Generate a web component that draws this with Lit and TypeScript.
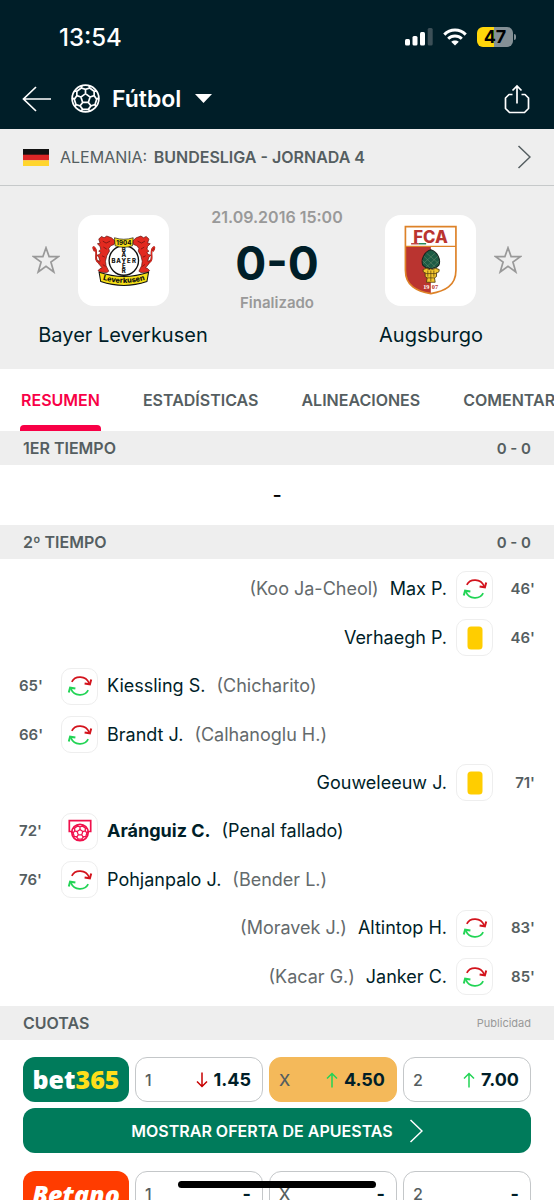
import { LitElement, html, svg, css, nothing } from "lit";
import { customElement, property, state } from "lit/decorators.js";
import { classMap } from "lit/directives/class-map.js";

type Side = "home" | "away";
type Kind = "sub" | "card" | "penalty";

interface MatchEvent {
  side: Side;
  minute: string;
  kind: Kind;
  player: string;
  detail?: string;
}

interface Odd {
  label: string;
  value: string;
  trend?: "up" | "down";
  selected?: boolean;
}

const EVENTS: MatchEvent[] = [
  { side: "away", minute: "46'", kind: "sub", player: "Max P.", detail: "(Koo Ja-Cheol)" },
  { side: "away", minute: "46'", kind: "card", player: "Verhaegh P." },
  { side: "home", minute: "65'", kind: "sub", player: "Kiessling S.", detail: "(Chicharito)" },
  { side: "home", minute: "66'", kind: "sub", player: "Brandt J.", detail: "(Calhanoglu H.)" },
  { side: "away", minute: "71'", kind: "card", player: "Gouweleeuw J." },
  { side: "home", minute: "72'", kind: "penalty", player: "Aránguiz C.", detail: "(Penal fallado)" },
  { side: "home", minute: "76'", kind: "sub", player: "Pohjanpalo J.", detail: "(Bender L.)" },
  { side: "away", minute: "83'", kind: "sub", player: "Altintop H.", detail: "(Moravek J.)" },
  { side: "away", minute: "85'", kind: "sub", player: "Janker C.", detail: "(Kacar G.)" },
];

const TABS = ["RESUMEN", "ESTADÍSTICAS", "ALINEACIONES", "COMENTARIOS"];

const BET365: Odd[] = [
  { label: "1", value: "1.45", trend: "down" },
  { label: "X", value: "4.50", trend: "up", selected: true },
  { label: "2", value: "7.00", trend: "up" },
];

const BETANO: Odd[] = [
  { label: "1", value: "-" },
  { label: "X", value: "-" },
  { label: "2", value: "-" },
];

// Seams of a football: centre pentagon, five spokes and the forks towards the rim.
function ballSeams(radius: number): string {
  const at = (r: number, deg: number) => {
    const a = (deg * Math.PI) / 180;
    return `${(radius * r * Math.cos(a)).toFixed(2)} ${(radius * r * Math.sin(a)).toFixed(2)}`;
  };
  const angles = [0, 1, 2, 3, 4].map((k) => -90 + 72 * k);
  const pentagon = `M${angles.map((a) => at(0.36, a)).join("L")}Z`;
  const rest = angles
    .map(
      (a) =>
        `M${at(0.36, a)}L${at(0.68, a)}` +
        `M${at(1, a - 15)}L${at(0.84, a - 22)}L${at(0.68, a)}L${at(0.84, a + 22)}L${at(1, a + 15)}` +
        `M${at(0.84, a + 22)}L${at(0.84, a + 50)}`
    )
    .join("");
  return pentagon + rest;
}

const swapIcon = html`<svg width="26" height="26" viewBox="-13 -13 26 26" fill="none" stroke-width="1.700" aria-hidden="true">
  <g stroke="#d3131c"><path d="M-8.200 -4.200C-5 -10.600 5.800 -10.800 9.200 -2.600" /><path d="M11.200 -6.600L9.900 -1.700L4.600 -2.600" stroke-width="2" /></g>
  <g stroke="#22d455"><path d="M8.200 4.200C5 10.600 -5.800 10.800 -9.200 2.600" /><path d="M-11.200 6.600L-9.900 1.700L-4.600 2.600" stroke-width="2" /></g>
</svg>`;

const cardIcon = html`<svg width="16" height="24" viewBox="0 0 16 24" aria-hidden="true">
  <rect x="0.500" y="0.500" width="15" height="23" rx="3.500" fill="#ffcd00" />
</svg>`;

const penaltyIcon = html`<svg width="24" height="24" viewBox="-12 -12 24 24" fill="none" stroke="#f0114c" aria-hidden="true">
  <path d="M-7.500 0.500H-10.700V-10.300H10.700V0.500H7.500" stroke-width="1.700" />
  <g transform="translate(0 1.500)" stroke-width="1.300">
    <circle r="8.200" stroke-width="1.700" /><path d=${ballSeams(8.2)} />
  </g>
</svg>`;

const chevron = html`<svg width="14" height="24" viewBox="0 0 14 24" fill="none" stroke="currentColor" stroke-width="1.500" aria-hidden="true">
  <path d="M1.500 1L13 12L1.500 23" />
</svg>`;

const lion = svg`
  <path d="M62 72L70 64L78 68L86 63L100 68L111 78L108 88L98 92L92 100L94 108L86 122L82 138L84 152L92 168L86 172L66 171L60 166L66 160L72 158L62 146L58 136L66 138L62 126L56 120L64 118L68 112L62 108L68 102L66 94L58 86L66 84Z"
    fill="#e22a20" stroke="#5c120e" stroke-width="2" />
  <path d="M64 143C44 138 62 108 50 98C44 92 44 100 50 108" fill="none" stroke="#8e1712" stroke-width="5" />
  <path d="M64 143C44 138 62 108 50 98C44 92 44 100 50 108" fill="none" stroke="#e22a20" stroke-width="3" />
  <path d="M74 78L84 84L96 78M76 96L86 102M72 122L80 126M74 148L82 154" fill="none" stroke="#5c120e" stroke-width="2" />`;

const leverkusen = html`<svg width="91" height="91" viewBox="0 0 272 272" role="img" aria-label="Bayer Leverkusen">
  ${lion}
  <g transform="translate(274 0) scale(-1 1)">${lion}</g>
  <circle cx="137" cy="136" r="44" fill="#fff" stroke="#111" stroke-width="4" />
  <path d="M109 68Q137 77 165 68L163 92Q137 101 111 92Z" fill="#f7e017" stroke="#111" stroke-width="2" />
  <text x="137" y="89" text-anchor="middle" class="crest-text" font-size="18">1904</text>
  <g class="crest-text" font-size="18" text-anchor="middle">
    <text x="106" y="142">B</text><text x="121" y="142">A</text><text x="137" y="142">Y</text>
    <text x="152" y="142">E</text><text x="167" y="142">R</text>
    <text x="137" y="112">B</text><text x="137" y="127">A</text>
    <text x="137" y="157">E</text><text x="137" y="173">R</text>
  </g>
  <path d="M63 171Q137 196 211 171L206 199Q137 222 68 199Z" fill="#f7e017" stroke="#111" stroke-width="3" />
  <path id="ribbon" d="M68 192Q137 214 206 192" fill="none" />
  <text class="crest-text" font-size="22" text-anchor="middle"><textPath href="#ribbon" startOffset="50%">Leverkusen</textPath></text>
</svg>`;

const augsburg = html`<svg width="91" height="91" viewBox="0 0 272 272" role="img" aria-label="Augsburgo">
  <path d="M61 35H212V165C212 212 178 228 137 235C95 228 61 212 61 165Z" fill="#fff" />
  <path d="M61 94H137V235C95 228 61 212 61 165Z" fill="#ba3430" />
  <path d="M61 35H212V165C212 212 178 228 137 235C95 228 61 212 61 165Z" fill="none" stroke="#dd8228" stroke-width="5" />
  <path d="M61 94H212" stroke="#dd8228" stroke-width="4" />
  <text x="136" y="83" text-anchor="middle" class="fca" font-size="50">FCA</text>
  <path d="M78 86H101" stroke="#ba3430" stroke-width="4" /><path d="M101 86H123" stroke="#0d7a43" stroke-width="4" />
  <path d="M137 104C157 110 168 134 161 150Q153 160 137 160Q121 160 113 150C106 134 117 110 137 104Z" fill="#1d5b45" stroke="#18231f" stroke-width="3" />
  <path d="M124 114L160 145M116 123L152 157M112 136L134 158M150 114L114 145M158 123L122 157M162 136L140 158" stroke="#6f8e70" stroke-width="1.500" />
  <path d="M114 163Q124 156 133 163Q137 158 141 163Q151 156 162 163Q162 174 154 172V184L148 188L150 201H124L126 188L120 184V172Q113 174 114 163Z" fill="#f2c62d" stroke="#4d370f" stroke-width="2.500" />
  <path d="M128 166V184M137 166V198M146 166V184M121 175H153M126 188H148" stroke="#4d370f" stroke-width="2" />
  <g class="year" font-size="19"><text x="114" y="221" fill="#fff">19</text><text x="140" y="221" fill="#ba3430">07</text></g>
</svg>`;

@customElement("status-bar")
class StatusBar extends LitElement {
  static styles = css`
    :host { display: flex; align-items: center; height: 62px; padding: 6px 38px 0 59px; color: #fff; }
    .clock { font-size: 24px; font-weight: 500; margin-right: auto; }
    .icons { display: flex; align-items: center; gap: 10px; }
    .battery { display: flex; align-items: center; gap: 1px; }
    .cell {
      width: 36px; height: 20px; border-radius: 6px; text-align: center;
      font-size: 18px; line-height: 20px; font-weight: 700; color: #000;
      background: linear-gradient(90deg, #ffd60a 47%, #849096 47%);
    }
    .nub { width: 2px; height: 6px; border-radius: 0 2px 2px 0; background: #849096; }
  `;

  render() {
    return html`
      <span class="clock">13:54</span>
      <div class="icons">
        <svg width="28" height="18" viewBox="0 0 28 18" fill="#fff" aria-hidden="true">
          <rect x="0" y="11" width="5" height="6.500" rx="1.500" /><rect x="7.500" y="8" width="5" height="9.500" rx="1.500" />
          <rect x="15" y="4" width="5" height="13.500" rx="1.500" /><rect x="22.700" y="0" width="5" height="17.500" rx="1.500" fill="#3c4f57" />
        </svg>
        <svg width="24" height="18" viewBox="0 0 24 18" fill="none" stroke="#fff" stroke-width="3" aria-hidden="true">
          <path d="M1.300 6.600C7.300 0.500 16.700 0.500 22.700 6.600" /><path d="M5.200 10.700C9 7 15 7 18.800 10.700" />
          <path d="M12 17.500L8.200 13.800C10.300 11.900 13.700 11.900 15.800 13.800Z" fill="#fff" stroke="none" />
        </svg>
        <div class="battery"><span class="cell">47</span><span class="nub"></span></div>
      </div>
    `;
  }
}

@customElement("match-event")
class MatchEventRow extends LitElement {
  @property({ attribute: false }) event!: MatchEvent;

  static styles = css`
    :host { display: block; }
    .row { display: flex; align-items: center; gap: 9px; height: 100%; padding: 0 19px; font-size: 18px; line-height: 24px; color: #001e28; }
    .away { flex-direction: row-reverse; }
    .minute { width: 33px; font-size: 15px; font-weight: 600; color: #555e61; }
    .away .minute { text-align: right; }
    .icon {
      display: flex; align-items: center; justify-content: center; box-sizing: border-box;
      width: 37px; height: 37px; border: 1px solid #eee; border-radius: 10px; background: #fff;
    }
    .text { display: flex; gap: 11px; }
    .away .text { flex-direction: row-reverse; }
    .detail { color: #646a6c; }
    .strong .player { font-weight: 700; }
    .strong .detail { color: #001e28; }
  `;

  render() {
    const e = this.event;
    const icons = { sub: swapIcon, card: cardIcon, penalty: penaltyIcon };
    return html`
      <div class=${classMap({ row: true, away: e.side === "away", strong: e.kind === "penalty" })}>
        <span class="minute">${e.minute}</span>
        <span class="icon">${icons[e.kind]}</span>
        <span class="text">
          <span class="player">${e.player}</span>
          ${e.detail ? html`<span class="detail">${e.detail}</span>` : nothing}
        </span>
      </div>
    `;
  }
}

@customElement("odds-row")
class OddsRow extends LitElement {
  @property() brand = "bet365";
  @property({ attribute: false }) odds: Odd[] = [];

  static styles = css`
    :host { display: grid; grid-template-columns: 106px repeat(3, minmax(0, 1fr)); gap: 6px; }
    .logo, .odd { height: 45px; border-radius: 12px; box-sizing: border-box; }
    .logo { display: flex; align-items: center; justify-content: center; text-decoration: none; color: #fff; }
    .bet365 { background: #007b5b; font: 800 25px/40px "Open Sans", sans-serif; padding-bottom: 1px; }
    .bet365 .number { color: #ffdf1b; }
    .betano { background: #ff3c00; font: italic 800 25px/40px "Open Sans", sans-serif; }
    .odd {
      display: flex; align-items: center; padding: 0 11px 0 9px; margin: 0; border: 1px solid #c4c7c9;
      background: #fff; font-family: inherit; font-size: 18px; font-weight: 700; color: #001e28; text-align: left;
    }
    .selected { background: #f4b95a; border-color: #f4b95a; }
    .label { font-size: 16px; font-weight: 500; color: #555e61; margin-right: auto; }
    .arrow { margin-right: 6px; }
    .down { color: #c80000; }
    .up { color: #22d455; }
  `;

  render() {
    const logo =
      this.brand === "bet365"
        ? html`<a class="logo bet365" href="#bet365"><span>bet<span class="number">365</span></span></a>`
        : html`<a class="logo betano" href="#betano">Betano</a>`;
    return html`
      ${logo}
      ${this.odds.map(
        (o) => html`<button class=${classMap({ odd: true, selected: !!o.selected })} type="button">
          <span class="label">${o.label}</span>
          ${o.trend
            ? html`<svg class="arrow ${o.trend}" width="12" height="16" viewBox="0 0 12 16" fill="none" stroke="currentColor" stroke-width="1.500" aria-hidden="true">
                <path d=${o.trend === "up" ? "M6 15.500V1.500M1 6.500L6 1.500L11 6.500" : "M6 0.500V14.500M1 9.500L6 14.500L11 9.500"} />
              </svg>`
            : nothing}
          <span>${o.value}</span>
        </button>`
      )}
    `;
  }
}

@customElement("app-root")
class AppRoot extends LitElement {
  @state() private tab = 0;
  @state() private starred: Record<Side, boolean> = { home: false, away: false };

  static styles = css`
    :host {
      display: block; position: relative; height: 100vh; overflow: hidden; background: #fff;
      font-family: Inter, "Liberation Sans", sans-serif; color: #001e28;
    }
    button { margin: 0; padding: 0; border: 0; background: none; color: inherit; font-family: inherit; }
    svg { display: block; flex: none; }
    .top { background: #001e28; color: #fff; }
    .bar { display: flex; align-items: center; height: 61px; padding: 0 24px 0 22px; }
    .sport { display: flex; align-items: center; margin: 0 auto 0 19px; font-size: 23px; font-weight: 600; }
    .sport .ball { margin-right: 12px; }
    .sport .caret { margin-left: 14px; }
    .league {
      display: flex; align-items: center; height: 56px; padding: 0 23px; background: #eee;
      border-bottom: 1px solid #c6c9ca; font-size: 16px; color: #555e61; text-decoration: none;
    }
    .league .name { margin: 0 auto 0 11px; }
    .league b { font-weight: 600; margin-left: 2px; }
    .match { background: #eee; padding: 21px 0 20px; }
    .duel { display: flex; align-items: center; padding: 0 32px; }
    .star { width: 28px; height: 28px; color: #999; }
    .starred { color: #ffcd00; }
    .crest { width: 91px; height: 91px; border-radius: 16px; background: #fff; margin: 0 18px; }
    .home-crest { margin-right: 0; }
    .away-crest { margin-left: 0; }
    .crest-text { font-family: Inter, sans-serif; font-weight: 800; fill: #111; }
    .fca { font-family: Inter, sans-serif; font-weight: 800; fill: #ba3430; }
    .year { font-family: "Liberation Serif", serif; font-weight: 700; }
    .result { flex: 1; text-align: center; color: #999; font-size: 16px; font-weight: 600; line-height: 20px; }
    .status { font-size: 15px; }
    .score { margin: 10px 0 4px; font-size: 46px; line-height: 52px; font-weight: 700; color: #001e28; }
    .teams { display: grid; grid-template-columns: 1fr 1fr; column-gap: 62px; margin-top: 8px; text-align: center; font-size: 20px; line-height: 28px; }
    .tabs { display: flex; gap: 41px; height: 62px; padding-left: 20px; overflow: hidden; }
    .tab { position: relative; flex: none; padding: 0 1px; font-size: 16px; font-weight: 600; color: #555e61; }
    .active { color: #f80046; }
    .active::after { content: ""; position: absolute; left: 0; right: 0; bottom: 0; height: 6px; border-radius: 4px 4px 0 0; background: #f80046; }
    .section {
      display: flex; align-items: center; justify-content: space-between; height: 34px; padding: 0 23px;
      margin: 0; background: #eee; font-size: 16px; font-weight: 600; color: #555e61;
    }
    .partial { font-size: 15px; }
    .ad { font-size: 11px; font-weight: 400; color: #999; }
    .empty { margin: 0; text-align: center; font-size: 20px; line-height: 60px; font-weight: 500; color: #000; }
    .events { display: grid; grid-auto-rows: 1fr; box-sizing: border-box; min-height: 447px; margin: 0; padding: 6px 0 5px; list-style: none; }
    .events li { display: grid; }
    .odds { padding: 17px 23px; }
    .offer {
      display: flex; align-items: center; justify-content: center; gap: 16px; width: 100%; height: 45px; margin: 6px 0 18px;
      border-radius: 12px; background: #007b5b; color: #fff; font-size: 16px; font-weight: 600;
    }
    .indicator { position: absolute; left: 50%; bottom: 12px; width: 198px; height: 7px; margin-left: -99px; border-radius: 4px; background: #000; }
  `;

  private star(side: Side) {
    return html`<button
      class=${classMap({ star: true, starred: this.starred[side] })}
      type="button"
      aria-label="Favorito"
      @click=${() => (this.starred = { ...this.starred, [side]: !this.starred[side] })}
    >
      <svg width="28" height="28" viewBox="0 0 28 28" fill="none" stroke="currentColor" stroke-width="1.700" aria-hidden="true">
        <path d="M14 1.800L17.100 10.600H26.400L18.900 16.100L21.800 26L14 20.300L6.200 26L9.100 16.100L1.600 10.600H10.900Z" />
      </svg>
    </button>`;
  }

  render() {
    return html`
      <header class="top">
        <status-bar></status-bar>
        <div class="bar">
          <button type="button" aria-label="Volver">
            <svg width="30" height="26" viewBox="0 0 30 26" fill="none" stroke="#fff" stroke-width="1.700" aria-hidden="true">
              <path d="M29 13H1.500M14 1L1.500 13L14 25" />
            </svg>
          </button>
          <button class="sport" type="button">
            <svg class="ball" width="29" height="29" viewBox="-14.500 -14.500 29 29" fill="none" stroke="#fff" stroke-width="1.700" aria-hidden="true">
              <circle r="13.400" /><path d=${ballSeams(13.4)} />
            </svg>
            Fútbol
            <svg class="caret" width="17" height="9" viewBox="0 0 17 9" aria-hidden="true"><path d="M0 0H17L8.500 9Z" fill="#fff" /></svg>
          </button>
          <button type="button" aria-label="Compartir">
            <svg width="26" height="30" viewBox="0 0 26 30" fill="none" stroke="#fff" stroke-width="1.700" aria-hidden="true">
              <path d="M8.500 10.500H5L1.500 14V24.500L5.500 28.500H20.500L24.500 24.500V14L21 10.500H17.500" stroke-linejoin="round" />
              <path d="M13 19.500V2M8.500 6.500L13 2L17.500 6.500" />
            </svg>
          </button>
        </div>
      </header>

      <a class="league" href="#bundesliga">
        <svg width="26" height="17" viewBox="0 0 26 17" aria-hidden="true">
          <rect width="26" height="6" fill="#111" /><rect y="5.700" width="26" height="5.700" fill="#dc2626" /><rect y="11.300" width="26" height="5.700" fill="#ffd52e" />
        </svg>
        <span class="name">ALEMANIA: <b>BUNDESLIGA - JORNADA 4</b></span>
        ${chevron}
      </a>

      <section class="match">
        <div class="duel">
          ${this.star("home")}
          <div class="crest home-crest">${leverkusen}</div>
          <div class="result">
            <div>21.09.2016 15:00</div>
            <div class="score">0-0</div>
            <div class="status">Finalizado</div>
          </div>
          <div class="crest away-crest">${augsburg}</div>
          ${this.star("away")}
        </div>
        <div class="teams"><span>Bayer Leverkusen</span><span>Augsburgo</span></div>
      </section>

      <nav class="tabs">
        ${TABS.map(
          (t, i) => html`<button class=${classMap({ tab: true, active: this.tab === i })} type="button" @click=${() => (this.tab = i)}>${t}</button>`
        )}
      </nav>

      <h2 class="section"><span>1ER TIEMPO</span><span class="partial">0 - 0</span></h2>
      <p class="empty">-</p>
      <h2 class="section"><span>2º TIEMPO</span><span class="partial">0 - 0</span></h2>
      <ul class="events">
        ${EVENTS.map((e) => html`<li><match-event .event=${e}></match-event></li>`)}
      </ul>

      <h2 class="section"><span>CUOTAS</span><span class="ad">Publicidad</span></h2>
      <div class="odds">
        <odds-row brand="bet365" .odds=${BET365}></odds-row>
        <button class="offer" type="button"><span>MOSTRAR OFERTA DE APUESTAS</span>${chevron}</button>
        <odds-row brand="betano" .odds=${BETANO}></odds-row>
      </div>
      <div class="indicator"></div>
    `;
  }
}
